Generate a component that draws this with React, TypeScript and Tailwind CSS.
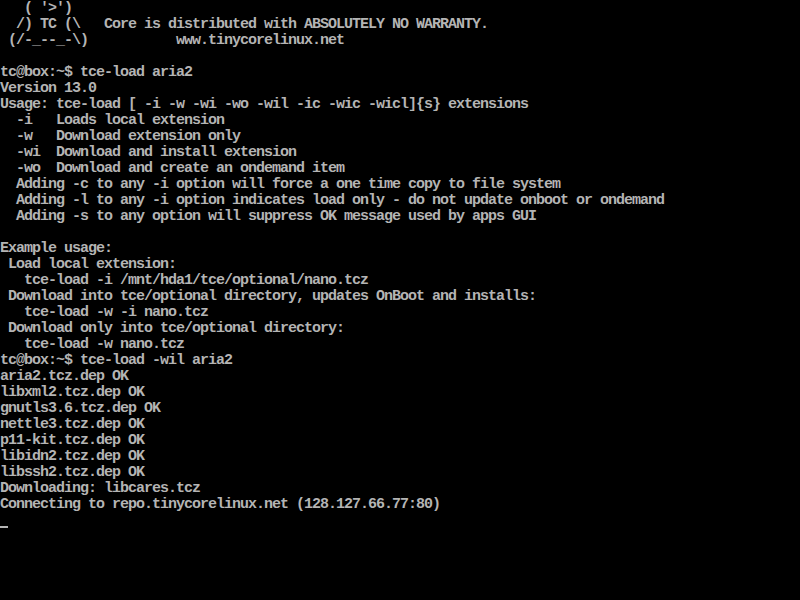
import React from "react";

const lines: string[] = [
  "   ( '>')",
  "  /) TC (\\   Core is distributed with ABSOLUTELY NO WARRANTY.",
  " (/-_--_-\\)           www.tinycorelinux.net",
  "",
  "tc@box:~$ tce-load aria2",
  "Version 13.0",
  "Usage: tce-load [ -i -w -wi -wo -wil -ic -wic -wicl]{s} extensions",
  "  -i   Loads local extension",
  "  -w   Download extension only",
  "  -wi  Download and install extension",
  "  -wo  Download and create an ondemand item",
  "  Adding -c to any -i option will force a one time copy to file system",
  "  Adding -l to any -i option indicates load only - do not update onboot or ondemand",
  "  Adding -s to any option will suppress OK message used by apps GUI",
  "",
  "Example usage:",
  " Load local extension:",
  "   tce-load -i /mnt/hda1/tce/optional/nano.tcz",
  " Download into tce/optional directory, updates OnBoot and installs:",
  "   tce-load -w -i nano.tcz",
  " Download only into tce/optional directory:",
  "   tce-load -w nano.tcz",
  "tc@box:~$ tce-load -wil aria2",
  "aria2.tcz.dep OK",
  "libxml2.tcz.dep OK",
  "gnutls3.6.tcz.dep OK",
  "nettle3.tcz.dep OK",
  "p11-kit.tcz.dep OK",
  "libidn2.tcz.dep OK",
  "libssh2.tcz.dep OK",
  "Downloading: libcares.tcz",
  "Connecting to repo.tinycorelinux.net (128.127.66.77:80)",
];

export default function App() {
  return (
    <div className="w-[800px] h-[600px] bg-black overflow-hidden">
      <div
        className="mt-px flex flex-col text-[#b4b4b4] font-bold text-[15px] leading-4 tracking-[-1px] whitespace-pre"
        style={{ fontFamily: '"Liberation Mono", "DejaVu Sans Mono", monospace' }}
      >
        {lines.map((l, i) => (
          <div key={i} className="h-4">
            {l}
          </div>
        ))}
        <div className="h-4 flex flex-col">
          <div className="mt-[13px] w-2 h-[2px] bg-[#b4b4b4]" />
        </div>
      </div>
    </div>
  );
}
